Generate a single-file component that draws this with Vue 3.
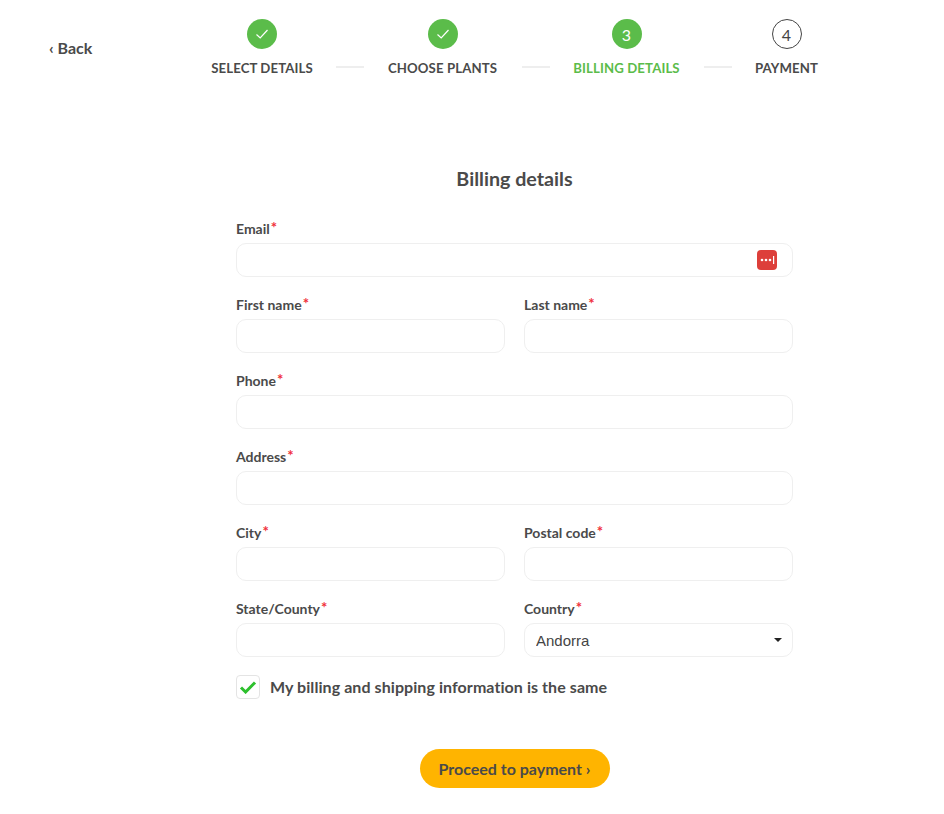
<script setup>
const steps = [
  { label: 'Select details', state: 'done' },
  { label: 'Choose plants', state: 'done' },
  { label: 'Billing details', state: 'active', n: 3 },
  { label: 'Payment', state: 'todo', n: 4 },
]
const rows = [
  [{ label: 'Email', type: 'email', manager: true }],
  [{ label: 'First name' }, { label: 'Last name' }],
  [{ label: 'Phone', type: 'tel' }],
  [{ label: 'Address' }],
  [{ label: 'City' }, { label: 'Postal code' }],
  [{ label: 'State/County' }, { label: 'Country', select: true }],
]
</script>

<template>
  <div class="page">
    <header class="top">
      <a class="back" href="#">‹ Back</a>
      <ol class="steps">
        <template v-for="(s, i) in steps" :key="s.label">
          <li v-if="i > 0" class="rule" aria-hidden="true"></li>
          <li class="step" :class="s.state">
            <span class="dot">
              <svg v-if="s.state === 'done'" width="14" height="14" viewBox="0 0 14 14" fill="none">
                <path d="M1.5 7.5 5.2 11 12.5 3" stroke="#fff" stroke-width="1.2" />
              </svg>
              <template v-else>{{ s.n }}</template>
            </span>
            <span class="name">{{ s.label }}</span>
          </li>
        </template>
      </ol>
    </header>

    <form class="form" @submit.prevent>
      <h1 class="title">Billing details</h1>
      <div v-for="(row, r) in rows" :key="r" class="row">
        <div v-for="f in row" :key="f.label" class="field">
          <label class="lbl">{{ f.label }}<span class="req">*</span></label>
          <div class="control">
            <select v-if="f.select" class="input select">
              <option>Andorra</option>
            </select>
            <input v-else class="input" :type="f.type || 'text'" />
            <svg v-if="f.select" class="caret" width="8" height="4" viewBox="0 0 8 4">
              <path d="M0 0h8L4 4z" fill="#222" />
            </svg>
            <svg v-if="f.manager" class="manager" width="20" height="20" viewBox="0 0 20 20">
              <rect width="20" height="20" rx="4" fill="#dd3f3a" />
              <circle cx="5" cy="10" r="1.3" fill="#fff" />
              <circle cx="9" cy="10" r="1.3" fill="#fff" />
              <circle cx="13" cy="10" r="1.3" fill="#fff" />
              <rect x="16" y="6" width="1.2" height="8" fill="#fff" />
            </svg>
          </div>
        </div>
      </div>

      <label class="same">
        <span class="box">
          <svg width="18" height="14" viewBox="0 0 18 14" fill="none">
            <path d="M2 7.5 6.6 12 16 2.5" stroke="#2dc02d" stroke-width="3" />
          </svg>
        </span>
        <span class="same-text">My billing and shipping information is the same</span>
      </label>

      <div class="actions">
        <button class="cta" type="submit">Proceed to payment ›</button>
      </div>
    </form>
  </div>
</template>

<style>
html, body { background: #fff; }
</style>

<style scoped>
.page {
  width: 944px;
  height: 814px;
  overflow: hidden;
  box-sizing: border-box;
  font-family: Lato, "Liberation Sans", sans-serif;
  color: #4a4a4a;
}
.top {
  display: flex;
  align-items: flex-start;
  padding-top: 19px;
}
.back {
  flex: none;
  width: 163px;
  padding: 19px 0 0 49px;
  font-size: 16px;
  line-height: 20px;
  font-weight: 700;
  color: #4a4a4a;
  text-decoration: none;
}
.steps {
  display: grid;
  grid-template-columns: 100px 28px 111px 28px 107px 28px 63px;
  column-gap: 23.5px;
  margin: 0;
  padding: 0;
  list-style: none;
}
.step {
  display: flex;
  flex-direction: column;
  align-items: center;
  gap: 10px;
}
.dot {
  display: flex;
  align-items: center;
  justify-content: center;
  width: 30px;
  height: 30px;
  box-sizing: border-box;
  border-radius: 50%;
  background: #5bbc4a;
  color: #fff;
  font-size: 16px;
}
.todo .dot {
  background: #fff;
  border: 1px solid #444;
  color: #444;
}
.name {
  font-size: 13.2px;
  line-height: 18px;
  font-weight: 700;
  letter-spacing: 0.1px;
  text-transform: uppercase;
  white-space: nowrap;
}
.active .name { color: #5bbc4a; }
.rule {
  height: 2px;
  margin-top: 47px;
  background: #eeeeee;
}
.form {
  width: 557px;
  margin: 0 0 0 236px;
}
.title {
  margin: 89px 0 26px;
  font-size: 19.7px;
  line-height: 26px;
  font-weight: 700;
  text-align: center;
  color: #4a4a4a;
}
.row {
  display: flex;
  gap: 19px;
  margin-bottom: 17px;
}
.field { flex: 1; min-width: 0; }
.lbl {
  display: block;
  margin-bottom: 5px;
  font-size: 14px;
  line-height: 18px;
  font-weight: 700;
  color: #4a4a4a;
}
.req {
  margin-left: 1px;
  font-size: 15px;
  color: #f0303a;
  vertical-align: 1px;
}
.control { position: relative; }
.input {
  display: block;
  width: 100%;
  height: 34px;
  box-sizing: border-box;
  border: 1px solid #efefef;
  border-radius: 10px;
  background: #fff;
  padding: 0 11px;
  font-family: "Liberation Sans", Arial, sans-serif;
  font-size: 15px;
  color: #444;
  outline: none;
}
.select { appearance: none; }
.caret {
  position: absolute;
  right: 11px;
  top: 15px;
  pointer-events: none;
}
.manager {
  position: absolute;
  right: 16px;
  top: 7px;
}
.same {
  display: flex;
  align-items: center;
  gap: 10px;
  margin-top: 2px;
  font-size: 16px;
  line-height: 24px;
  font-weight: 700;
  letter-spacing: 0.07px;
  color: #4a4a4a;
}
.same-text { padding-top: 1px; }
.box {
  display: flex;
  align-items: center;
  justify-content: center;
  width: 24px;
  height: 24px;
  box-sizing: border-box;
  border: 1px solid #e4e4e4;
  border-radius: 4px;
}
.actions {
  display: flex;
  justify-content: center;
  margin-top: 50px;
}
.cta {
  width: 190px;
  height: 39px;
  border: 0;
  border-radius: 20px;
  background: #ffb400;
  font-family: inherit;
  font-size: 16px;
  font-weight: 700;
  color: #4a4a4a;
}
</style>
